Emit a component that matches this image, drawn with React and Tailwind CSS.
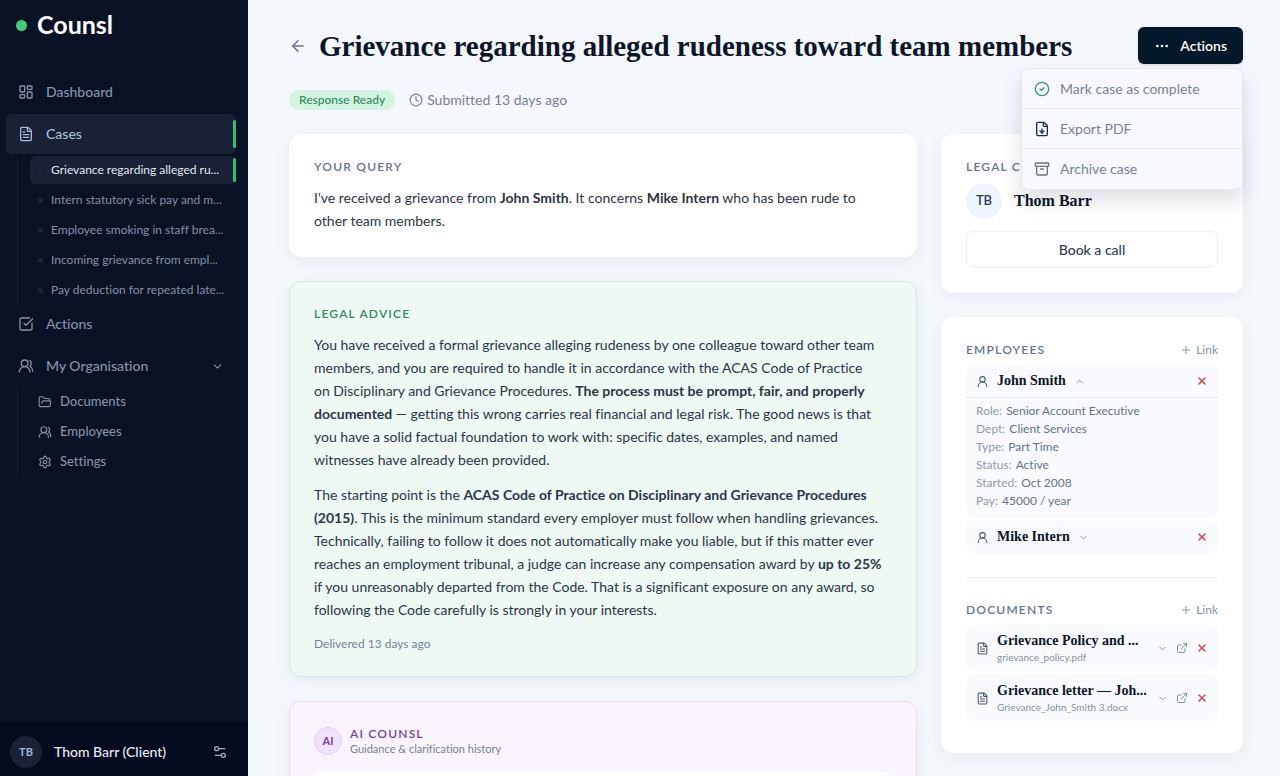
import {
  Archive,
  ArrowLeft,
  ChevronDown,
  ChevronUp,
  CircleCheck,
  Clock,
  Ellipsis,
  ExternalLink,
  FileDown,
  FileText,
  FolderOpen,
  LayoutDashboard,
  Plus,
  Settings,
  Settings2,
  SquareCheckBig,
  UserRound,
  UsersRound,
  X,
} from "lucide-react";

const CASES = [
  "Grievance regarding alleged ru...",
  "Intern statutory sick pay and m...",
  "Employee smoking in staff brea...",
  "Incoming grievance from empl...",
  "Pay deduction for repeated late...",
];

const ORG_LINKS = [
  { label: "Documents", icon: FolderOpen },
  { label: "Employees", icon: UsersRound },
  { label: "Settings", icon: Settings },
];

const MENU = [
  { label: "Mark case as complete", icon: CircleCheck, color: "text-[#2f9e6b]" },
  { label: "Export PDF", icon: FileDown, color: "text-[#1e2d45]" },
  { label: "Archive case", icon: Archive, color: "text-[#64748b]" },
];

const DETAILS = [
  ["Role", "Senior Account Executive"],
  ["Dept", "Client Services"],
  ["Type", "Part Time"],
  ["Status", "Active"],
  ["Started", "Oct 2008"],
  ["Pay", "45000 / year"],
];

const DOCUMENTS = [
  { title: "Grievance Policy and ...", file: "grievance_policy.pdf" },
  { title: "Grievance letter — Joh...", file: "Grievance_John_Smith 3.docx" },
];

const SERIF = "font-['Liberation_Serif',serif] font-bold text-[#0b1628]";
const CARD = "rounded-xl border p-6 shadow-[0_4px_16px_rgba(15,23,42,0.06)]";

function NavLink({ icon: Icon, label, active, children }) {
  return (
    <a
      href="#"
      className={
        active
          ? "relative flex h-10 items-center gap-3 rounded-md bg-[#182135] px-3 text-[#a9bbd9]"
          : "relative flex h-10 items-center gap-3 rounded-md px-3 text-[#8592a9]"
      }
    >
      <Icon size={16} aria-hidden="true" />
      <span className="flex-1 text-sm font-medium">{label}</span>
      {children}
      {active && <span className="absolute inset-y-1.5 right-0 w-[3px] rounded-sm bg-[#2fbf71]" />}
    </a>
  );
}

function Sidebar() {
  return (
    <aside className="flex w-[248px] shrink-0 flex-col bg-[#0a1226]">
      <div className="flex h-[50px] items-center gap-2.5 pl-4">
        <span className="size-[11px] rounded-full bg-[#3fce72]" />
        <span className="text-[25px] font-bold text-white">Counsl</span>
      </div>

      <nav className="mt-[22px] flex flex-1 flex-col pr-3 pl-1.5">
        <NavLink icon={LayoutDashboard} label="Dashboard" />
        <div className="mt-0.5">
          <NavLink icon={FileText} label="Cases" active />
        </div>
        <ul className="mt-0.5 ml-[11px] flex flex-col gap-0.5 border-l border-[#141d31] pl-3">
          {CASES.map((name, i) => (
            <li key={name}>
              <a
                href="#"
                className={
                  i === 0
                    ? "relative flex h-7 items-center gap-2 rounded-md bg-[#182135] px-2 text-xs whitespace-nowrap text-[#e2e8f0]"
                    : "relative flex h-7 items-center gap-2 rounded-md px-2 text-xs whitespace-nowrap text-[#8490a6]"
                }
              >
                <span className="size-[5px] shrink-0 rounded-full bg-[#15293a]" />
                {name}
                {i === 0 && (
                  <span className="absolute inset-y-0.5 right-0 w-[3px] rounded-sm bg-[#2fbf71]" />
                )}
              </a>
            </li>
          ))}
        </ul>
        <NavLink icon={SquareCheckBig} label="Actions" />
        <div className="mt-0.5">
          <NavLink icon={UsersRound} label="My Organisation">
            <ChevronDown size={13} aria-hidden="true" />
          </NavLink>
        </div>
        <ul className="mt-0.5 ml-[11px] flex flex-col gap-0.5 border-l border-[#141d31] pl-5">
          {ORG_LINKS.map(({ label, icon: Icon }) => (
            <li key={label}>
              <a href="#" className="flex h-7 items-center gap-2 text-[13px] font-medium text-[#8490a6]">
                <Icon size={14} aria-hidden="true" />
                {label}
              </a>
            </li>
          ))}
        </ul>
      </nav>

      <div className="flex h-[54px] items-center gap-3 bg-[#050b1e] pt-1.5 pr-5 pl-2.5">
        <span className="flex size-8 items-center justify-center rounded-full bg-[#182338] text-[11px] font-bold text-[#9fb3d1]">
          TB
        </span>
        <span className="flex-1 text-sm font-medium text-[#e8edf5]">Thom Barr (Client)</span>
        <button type="button" aria-label="Preferences" className="text-[#a3afc2]">
          <Settings2 size={16} />
        </button>
      </div>
    </aside>
  );
}

function Label({ children, color = "text-[#64748b]" }) {
  return (
    <h2 className={`text-xs leading-4 font-semibold tracking-widest uppercase ${color}`}>{children}</h2>
  );
}

function LinkHeader({ children }) {
  return (
    <div className="flex items-center justify-between">
      <Label>{children}</Label>
      <button type="button" className="flex items-center gap-1 text-xs leading-4 text-[#8592a6]">
        <Plus size={12} aria-hidden="true" />
        Link
      </button>
    </div>
  );
}

function RemoveButton({ name }) {
  return (
    <button type="button" aria-label={`Remove ${name}`} className="text-[#d64545]">
      <X size={12} strokeWidth={3} />
    </button>
  );
}

function EmployeeRow({ name, open }) {
  const Chevron = open ? ChevronUp : ChevronDown;
  return (
    <div className="flex h-8 items-center px-2.5">
      <UserRound size={13} className="text-[#475a70]" aria-hidden="true" />
      <span className={`ml-2 text-sm ${SERIF}`}>{name}</span>
      <button type="button" aria-label={`Toggle ${name}`} className="ml-2 flex-1 text-[#8592a6]">
        <Chevron size={11} />
      </button>
      <RemoveButton name={name} />
    </div>
  );
}

function ActionsMenu() {
  return (
    <div className="relative">
      <button
        type="button"
        className="flex h-[37px] items-center gap-2.5 rounded-md bg-[#03192b] px-4 text-sm font-semibold text-white shadow-sm"
      >
        <Ellipsis size={16} aria-hidden="true" />
        Actions
      </button>
      <div className="absolute top-full right-0 z-10 mt-1 w-[222px] divide-y divide-[#e6eaf0] overflow-hidden rounded-lg border border-[#e6eaf0] bg-[#f8f9fe] shadow-[0_10px_20px_rgba(15,23,42,0.14)]">
        {MENU.map(({ label, icon: Icon, color }) => (
          <button
            key={label}
            type="button"
            className="flex h-10 w-full items-center gap-2.5 px-3 text-sm text-[#75829a]"
          >
            <Icon size={16} className={color} aria-hidden="true" />
            {label}
          </button>
        ))}
      </div>
    </div>
  );
}

export default function App() {
  return (
    <div className="flex h-screen overflow-hidden bg-[#f4f7fc] font-[Lato,sans-serif] [font-variant-ligatures:no-common-ligatures]">
      <Sidebar />

      <main className="min-w-0 flex-1 overflow-hidden pt-[27px] pr-[37px] pl-[41px]">
        <header className="flex items-center">
          <a href="#" aria-label="Back" className="text-[#64748b]">
            <ArrowLeft size={18} />
          </a>
          <h1 className={`ml-3 flex-1 text-[29px] leading-9 whitespace-nowrap ${SERIF}`}>
            Grievance regarding alleged rudeness toward team members
          </h1>
          <ActionsMenu />
        </header>

        <div className="mt-[26px] flex h-5 items-center gap-3.5">
          <span className="rounded-full bg-[#d3f5e0] px-2.5 text-xs leading-5 font-medium text-[#2c8a5b]">
            Response Ready
          </span>
          <span className="flex items-center gap-1 text-sm text-[#75829a]">
            <Clock size={14} aria-hidden="true" />
            Submitted 13 days ago
          </span>
        </div>

        <div className="mt-6 flex items-start gap-6">
          <div className="flex min-w-0 flex-1 flex-col gap-6">
            <section className={`${CARD} border-white bg-white`}>
              <Label>Your query</Label>
              <p className="mt-[11px] text-sm leading-[23px] text-[#2b3647]">
                I've received a grievance from <b>John Smith</b>. It concerns <b>Mike Intern</b> who has
                been rude to other team members.
              </p>
            </section>

            <section className={`${CARD} border-[#d0ebdc] bg-[#eef9f4]`}>
              <Label color="text-[#2c8f5c]">Legal advice</Label>
              <p className="mt-[11px] pr-3 text-sm leading-[23px] text-[#2b3647]">
                You have received a formal grievance alleging rudeness by one colleague toward other team
                members, and you are required to handle it in accordance with the ACAS Code of Practice on
                Disciplinary and Grievance Procedures.{" "}
                <b>The process must be prompt, fair, and properly documented</b> — getting this wrong
                carries real financial and legal risk. The good news is that you have a solid factual
                foundation to work with: specific dates, examples, and named witnesses have already been
                provided.
              </p>
              <p className="mt-3 text-sm leading-[23px] text-[#2b3647]">
                The starting point is the{" "}
                <b>ACAS Code of Practice on Disciplinary and Grievance Procedures (2015)</b>. This is the
                minimum standard every employer must follow when handling grievances. Technically, failing
                to follow it does not automatically make you liable, but if this matter ever reaches an
                employment tribunal, a judge can increase any compensation award by <b>up to 25%</b> if you
                unreasonably departed from the Code. That is a significant exposure on any award, so
                following the Code carefully is strongly in your interests.
              </p>
              <p className="mt-[15px] text-xs leading-4 text-[#75829a]">Delivered 13 days ago</p>
            </section>

            <section className={`${CARD} border-[#e6dcf3] bg-[#f9f4fe]`}>
              <div className="flex items-center gap-2">
                <span className="flex size-7 items-center justify-center rounded-full border border-[#e0d0f5] bg-[#efe3fc] text-[11px] font-bold text-[#7440b0]">
                  AI
                </span>
                <div>
                  <Label color="text-[#7440b0]">AI Counsl</Label>
                  <p className="text-[11px] leading-[14px] text-[#75829a]">
                    Guidance &amp; clarification history
                  </p>
                </div>
              </div>
              <div className="mt-4 h-24 rounded-lg bg-white" />
            </section>
          </div>

          <div className="flex w-[302px] shrink-0 flex-col gap-6">
            <section className={`${CARD} border-white bg-white`}>
              <Label>Legal contact</Label>
              <div className="mt-2 flex items-center gap-3">
                <span className="flex size-9 items-center justify-center rounded-full bg-[#eff4fb] text-[13px] font-semibold text-[#2c3e57]">
                  TB
                </span>
                <span className={`text-base ${SERIF}`}>Thom Barr</span>
              </div>
              <button
                type="button"
                className="mt-3 h-[37px] w-full rounded-lg border border-[#edf0f4] text-sm font-medium text-[#2c3e57]"
              >
                Book a call
              </button>
            </section>

            <section className={`${CARD} border-white bg-white`}>
              <LinkHeader>Employees</LinkHeader>
              <div className="mt-[7px] rounded-lg bg-[#f8fafe]">
                <EmployeeRow name="John Smith" open />
                <dl className="border-t border-[#e6eaf0] px-2.5 pt-1 pb-[7px] text-xs leading-[18px]">
                  {DETAILS.map(([term, value]) => (
                    <div key={term} className="flex gap-1">
                      <dt className="text-[#8e9aad]">{term}:</dt>
                      <dd className="text-[#65738a]">{value}</dd>
                    </div>
                  ))}
                </dl>
              </div>
              <div className="mt-1 rounded-lg bg-[#f8fafe]">
                <EmployeeRow name="Mike Intern" />
              </div>

              <hr className="my-6 border-[#edf0f4]" />

              <LinkHeader>Documents</LinkHeader>
              <ul className="my-[7px] flex flex-col gap-1">
                {DOCUMENTS.map(({ title, file }) => (
                  <li key={file} className="flex h-[46px] items-center rounded-lg bg-[#f8fafe] px-2.5">
                    <FileText size={13} className="shrink-0 text-[#475a70]" aria-hidden="true" />
                    <div className="ml-2 w-[152px] whitespace-nowrap">
                      <p className={`text-sm leading-[18px] ${SERIF}`}>{title}</p>
                      <p className="text-[10px] leading-[14px] text-[#8592a6]">{file}</p>
                    </div>
                    <div className="flex flex-1 items-center justify-end gap-2 text-[#8592a6]">
                      <button type="button" aria-label={`Expand ${file}`}>
                        <ChevronDown size={11} />
                      </button>
                      <a href="#" aria-label={`Open ${file}`}>
                        <ExternalLink size={12} />
                      </a>
                      <RemoveButton name={file} />
                    </div>
                  </li>
                ))}
              </ul>
            </section>
          </div>
        </div>
      </main>
    </div>
  );
}
